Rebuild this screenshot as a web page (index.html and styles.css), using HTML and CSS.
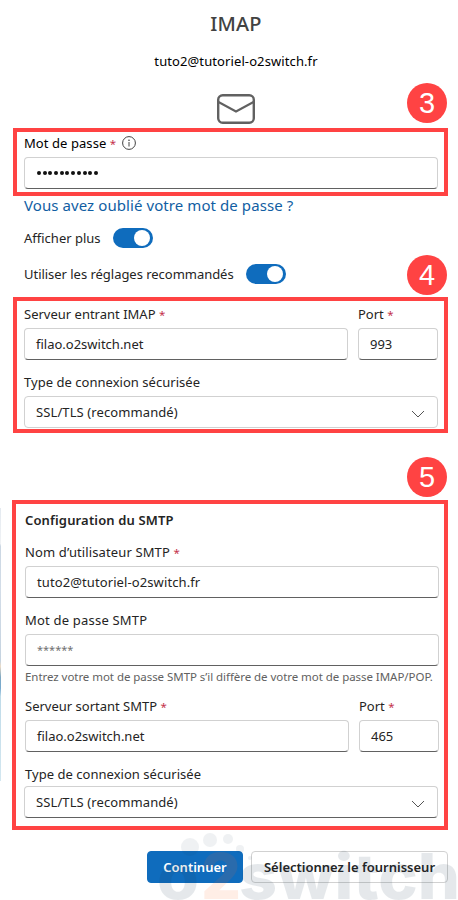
FILE: index.html
```html
<!DOCTYPE html>
<html lang="fr">
<head>
<meta charset="utf-8">
<title>IMAP</title>
<link rel="stylesheet" href="styles.css">
</head>
<body>
<main class="page">
  <header class="head">
    <h1 class="title">IMAP</h1>
    <p class="account">tuto2@tutoriel-o2switch.fr</p>
    <svg class="mail" width="40" height="32" viewBox="0 0 40 32" fill="none" stroke="#616161" stroke-width="2.4"><rect x="2.2" y="2.2" width="35.6" height="27.6" rx="4.5"/><path d="M2.5 9 20 18.5 37.5 9" stroke-width="2"/></svg>
  </header>

  <section class="frame frame-password">
    <span class="badge">3</span>
    <label class="label dark l-pass">Mot de passe <i>*</i>
      <svg class="info" width="14" height="14" viewBox="0 0 14 14" fill="none" stroke="#424242"><circle cx="7" cy="7" r="6.4"/><path d="M7 6v4.5"/><circle cx="7" cy="4.2" r=".4"/></svg>
    </label>
    <div class="field dots"><span></span><span></span><span></span><span></span><span></span><span></span><span></span><span></span><span></span><span></span><span></span></div>
  </section>

  <a class="forgot">Vous avez oublié votre mot de passe ?</a>
  <div class="toggle-row"><span class="t-more">Afficher plus</span><span class="toggle"></span></div>
  <div class="toggle-row second"><span class="t-reco">Utiliser les réglages recommandés</span><span class="toggle"></span></div>

  <section class="frame frame-imap">
    <span class="badge">4</span>
    <div class="pair">
      <div><label class="label l-in">Serveur entrant IMAP <i>*</i></label><div class="field"><span class="t-host">filao.o2switch.net</span></div></div>
      <div><label class="label l-port">Port <i>*</i></label><div class="field">993</div></div>
    </div>
    <label class="label l-type">Type de connexion sécurisée</label>
    <div class="field select plain"><span class="t-ssl">SSL/TLS (recommandé)</span><svg width="14" height="8" viewBox="0 0 14 8" fill="none" stroke="#555"><path d="m1 1 6 6 6-6"/></svg></div>
  </section>

  <section class="frame frame-smtp">
    <span class="badge">5</span>
    <h2 class="subtitle">Configuration du SMTP</h2>
    <label class="label l-user">Nom d’utilisateur SMTP <i>*</i></label>
    <div class="field"><span class="t-user">tuto2@tutoriel-o2switch.fr</span></div>
    <label class="label l-spass">Mot de passe SMTP</label>
    <div class="field placeholder">******</div>
    <p class="hint">Entrez votre mot de passe SMTP s’il diffère de votre mot de passe IMAP/POP.</p>
    <div class="pair">
      <div><label class="label l-out">Serveur sortant SMTP <i>*</i></label><div class="field"><span class="t-host">filao.o2switch.net</span></div></div>
      <div><label class="label l-port">Port <i>*</i></label><div class="field">465</div></div>
    </div>
    <label class="label l-type">Type de connexion sécurisée</label>
    <div class="field select shifted"><span class="t-ssl">SSL/TLS (recommandé)</span><svg width="14" height="8" viewBox="0 0 14 8" fill="none" stroke="#555"><path d="m1 1 6 6 6-6"/></svg></div>
  </section>

  <footer class="actions">
    <button class="btn primary">Continuer</button>
    <button class="btn">Sélectionnez le fournisseur</button>
  </footer>
  <svg class="watermark" width="308" height="75" viewBox="0 0 308 75" fill="#1d3c55">
    <g opacity=".6"><circle cx="40" cy="22" r="9"/><circle cx="60" cy="15" r="7"/><circle cx="78" cy="14" r="5"/><circle cx="90" cy="24" r="4"/><circle cx="100" cy="33" r="2"/></g>
    <text class="mark" x="7" y="74" textLength="42" lengthAdjust="spacingAndGlyphs">o</text>
    <text class="mark two" x="51" y="74" textLength="40" lengthAdjust="spacingAndGlyphs">2</text>
    <text class="mark" x="89" y="74" textLength="221" lengthAdjust="spacingAndGlyphs">switch</text>
  </svg>
</main>
</body>
</html>
```
FILE: styles.css
```css
* { box-sizing: border-box; }
body { margin: 0; background: #fff; color: #242424; font: 13px/20px "Noto Sans", "Open Sans", sans-serif; }
.page { position: relative; width: 458px; height: 900px; overflow: hidden; padding-left: 13px; }
.page::before { content: ""; position: absolute; left: 0; top: 508px; width: 1px; height: 273px; background: linear-gradient(#e4eaf0, #f0f2f5 13%, #cbd7e3 14%, #d3dde8 30%, #c5d3e0 56%, #ecdcc8 58%, #7fa9c4 62%, #78abd0 66%, #bfdbe9 69%, #d3e7f0); }
.head { display: flex; flex-direction: column; align-items: center; height: 128px; padding-left: 1px; padding-top: 10px; }
.title { margin: 0; font-size: 20px; line-height: 28px; font-weight: 500; letter-spacing: .2px; color: #424242; }
.account { margin: 13px 0 22px; line-height: 20px; color: #000; letter-spacing: .1px; }
.mail { display: block; }
.frame { position: relative; width: 435px; border: 4px solid #ff4343; padding: 0 6px 0 7px; }
.badge { position: absolute; right: -3px; top: -49px; width: 40px; height: 40px; border-radius: 50%; background: #ff4343; color: #fff; font: 29px/40px "Liberation Sans", sans-serif; text-align: center; }
.label { display: block; height: 20px; line-height: 20px; white-space: nowrap; }
.label i { color: #c4314b; font-style: normal; font-size: 11.5px; line-height: 1; }
.l-pass { letter-spacing: .07px; }
.l-user { letter-spacing: .12px; }
.l-spass { letter-spacing: .2px; }
.dark { color: #000; }
.field { display: flex; align-items: center; height: 32px; border: 1px solid #d1d1d1; border-bottom-color: #616161; border-radius: 4px; padding: 0 12px 0 11px; white-space: nowrap; background: #fff; }
.t-user { letter-spacing: .1px; }
.t-ssl { letter-spacing: .1px; }
.plain { border-bottom-color: #d1d1d1; }
.select { justify-content: space-between; }
.select svg { margin-top: 4px; }
.frame-password { height: 68px; padding-top: 1px; }
.frame-password .field { margin-top: 4px; }
.info { vertical-align: -2px; margin-left: 2px; }
.dots { gap: 1.7px; padding-left: 12px; }
.dots span { width: 4px; height: 4px; border-radius: 50%; background: #111; }
.forgot { display: block; margin: -1px 0 13px 11px; height: 20px; font-size: 15px; line-height: 20px; letter-spacing: .08px; color: #115ea3; white-space: nowrap; }
.toggle-row { display: flex; align-items: center; gap: 12px; height: 20px; margin-left: 11px; white-space: nowrap; }
.second { margin-top: 16px; margin-bottom: 13px; }
.t-reco { letter-spacing: -.03px; }
.toggle { display: flex; justify-content: flex-end; width: 40px; height: 20px; border-radius: 10px; background: #0f6cbd; padding: 2px 3px; }
.toggle::after { content: ""; width: 16px; height: 16px; border-radius: 50%; background: #fff; }
.frame-imap { height: 136px; padding-top: 3px; }
.frame-imap .badge { top: -46px; }
.pair { display: grid; grid-template-columns: 324px 80px; gap: 10px; }
.pair .field { margin-top: 4px; }
.l-type { margin-top: 12px; letter-spacing: .03px; }
.plain { margin-top: 4px; }
.frame-smtp { width: 436px; margin: 67px 0 0 -1px; height: 330px; padding: 6px 5px 0 9px; }
.frame-smtp .badge { top: -47px; }
.subtitle { margin: 0 0 12px; font-size: 13px; line-height: 20px; font-weight: 600; letter-spacing: .15px; white-space: nowrap; }
.l-user + .field, .l-spass + .field { margin-top: 4px; }
.l-spass { margin-top: 12px; }
.placeholder { color: #707070; font-size: 11px; }
.hint { margin: 3px 0 11px; font-size: 11.5px; line-height: 16px; letter-spacing: -.05px; color: #616161; white-space: nowrap; }
.shifted { width: 414px; margin: 2px 0 0 -1px; }
.actions { display: flex; gap: 8px; margin: 21px 0 0 134px; }
.btn { height: 32px; width: 197px; border: 1px solid #d1d1d1; border-radius: 4px; background: #fff; color: #242424; font: 600 13px/20px "Noto Sans", sans-serif; padding: 0; white-space: nowrap; }
.primary { width: 96px; background: #0f6cbd; border-color: #0f6cbd; color: #fff; }
.watermark { position: absolute; left: 150px; top: 825px; opacity: .11; pointer-events: none; }
.mark { font: 800 63px Inter, sans-serif; }
.two { fill: #ff6a2a; }
```
